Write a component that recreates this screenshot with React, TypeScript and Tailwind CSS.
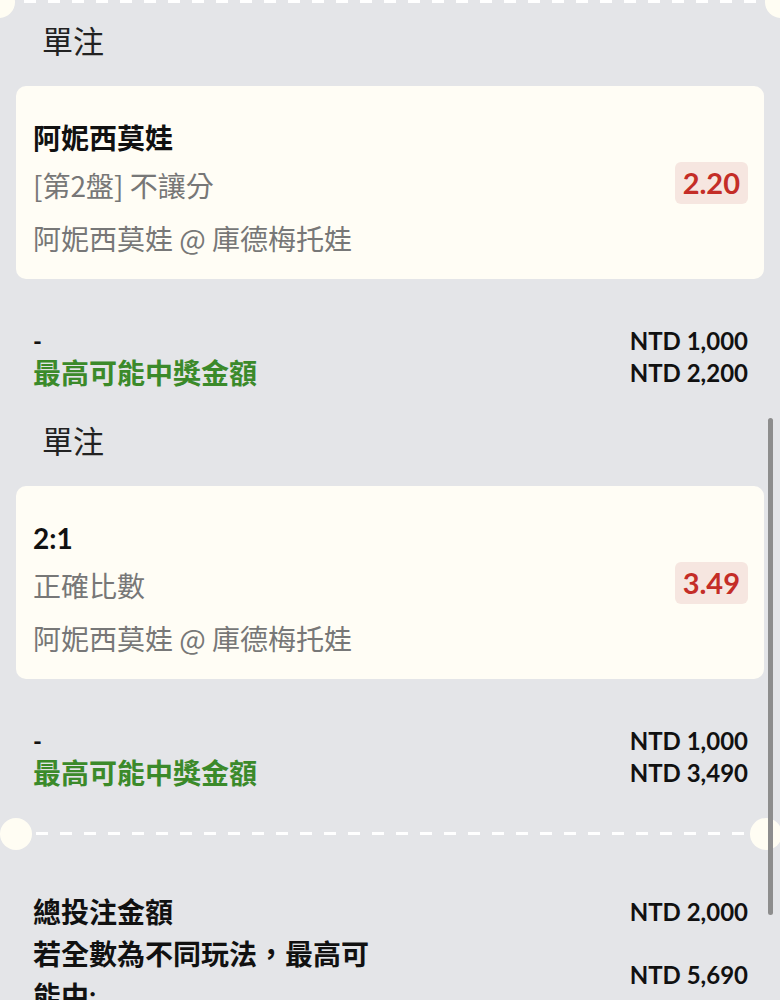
import React from "react";

type Bet = { title: string; market: string; match: string; odds: string; stake: string; payout: string };

const bets: Bet[] = [
  { title: "阿妮西莫娃", market: "[第2盤] 不讓分", match: "阿妮西莫娃 @ 庫德梅托娃", odds: "2.20", stake: "NTD 1,000", payout: "NTD 2,200" },
  { title: "2:1", market: "正確比數", match: "阿妮西莫娃 @ 庫德梅托娃", odds: "3.49", stake: "NTD 1,000", payout: "NTD 3,490" },
];

const font = "font-['Lato','Noto_Sans_CJK_TC',sans-serif]";
const cjk = "font-['Noto_Sans_CJK_TC',sans-serif]";

function Perforation({ top }: { top?: boolean }) {
  return (
    <div className={`relative h-[32px] ${top ? "-mt-[14px]" : ""}`}>
      <div className={`absolute top-[14px] h-[3px] bg-[repeating-linear-gradient(90deg,#ffffff_0_12px,transparent_12px_24px)] ${top ? "left-[24px] right-[23px]" : "left-[36px] right-[32px]"}`} />
      <div className={`absolute top-0 w-[32px] h-[32px] rounded-full bg-[#fffdf3] ${top ? "-left-[17px]" : "left-0"}`} />
      <div className={`absolute top-0 w-[32px] h-[32px] rounded-full bg-[#fffdf3] ${top ? "left-[765px]" : "left-[750px]"}`} />
    </div>
  );
}

function BetBlock({ bet }: { bet: Bet }) {
  return (
    <div className="px-4">
      <div className={`pl-[26px] text-[31px] leading-[40px] text-[#222] pt-[20px] ${cjk}`}>單注</div>
      <div className="mt-[26px] rounded-[10px] bg-[#fffdf5] flex items-center justify-between pl-[17px] pr-[16px]">
        <div className="pt-[32px] pb-[21px]">
          <div className="text-[28px] leading-[40px] font-bold text-[#111]">{bet.title}</div>
          <div className={`mt-[7px] text-[28px] leading-[40px] text-[#777] ${cjk}`}>{bet.market}</div>
          <div className={`mt-[13px] text-[28px] leading-[40px] text-[#777] ${cjk}`}>{bet.match}</div>
        </div>
        <div className="rounded-[6px] bg-[#f6e6e0] px-[8px] h-[42px] flex items-center text-[29px] font-bold text-[#c42d27]">{bet.odds}</div>
      </div>
      <div className="mt-[46px] flex justify-between pl-[17px] pr-[16px]">
        <div>
          <div className="text-[24px] leading-[32px] font-bold text-[#111]">-</div>
          <div className="text-[28px] leading-[32px] font-bold text-[#3b8a2a]">最高可能中獎金額</div>
        </div>
        <div className="text-right text-[24px] leading-[32px] font-bold text-[#111]">
          <div>{bet.stake}</div>
          <div>{bet.payout}</div>
        </div>
      </div>
    </div>
  );
}

export default function App() {
  return (
    <div className={`relative w-[780px] h-[1000px] overflow-hidden bg-[#e4e5e8] ${font}`}>
      <Perforation top />
      <div className="-mt-[18px]">
        <BetBlock bet={bets[0]} />
      </div>
      <div className="mt-[11px]">
        <BetBlock bet={bets[1]} />
      </div>
      <div className="mt-[29px]">
        <Perforation />
      </div>
      <div className="mt-[41px] px-4">
        <div className="flex justify-between items-center pl-[17px] pr-[16px]">
          <div className="text-[28px] leading-[42px] font-bold text-[#111]">總投注金額</div>
          <div className="text-[24px] font-bold text-[#111]">NTD 2,000</div>
        </div>
        <div className="flex justify-between items-center pl-[17px] pr-[16px]">
          <div className="w-[345px] text-[28px] leading-[42px] font-bold text-[#111]">若全數為不同玩法，最高可能中:</div>
          <div className="text-[24px] font-bold text-[#111]">NTD 5,690</div>
        </div>
      </div>
      <div className="absolute left-[768px] top-[418px] w-[5px] h-[497px] rounded-full bg-[#8d8d8d]" />
    </div>
  );
}
